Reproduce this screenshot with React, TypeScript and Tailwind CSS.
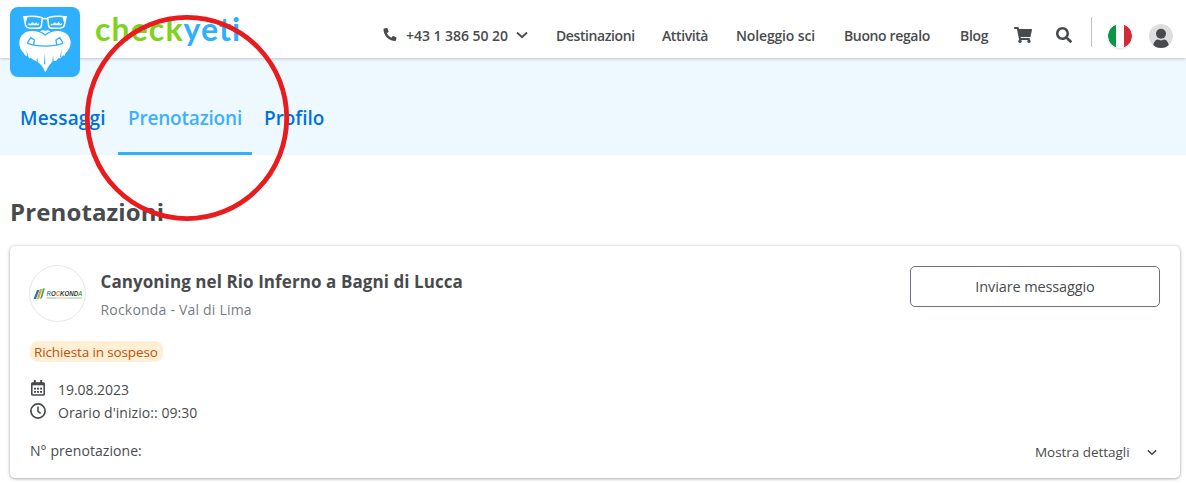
import React from "react";
import { FaPhoneAlt, FaShoppingCart, FaSearch } from "react-icons/fa";

function YetiLogo() {
  return (
    <svg className="relative z-10 h-[70px] w-[70px] shrink-0" viewBox="15 6 210 210">
      <rect x="15" y="6" width="210" height="210" rx="24" fill="#2eb0ff" />
      <path
        fill="#fff"
        d="M121 92C132 83 143 78 158 78C181 78 197 93 197 112C197 126 190 137 182 144L178 153L174 151L167 160L161 159L153 168L146 167C136 175 129 184 124 197L120 201C117 191 108 178 98 171L92 167L86 165L78 159L73 160L68 152L61 152L56 144C48 136 43 126 43 113C43 92 59 78 81 78C97 78 110 83 121 92Z"
      />
      <path
        fill="none"
        stroke="#2eb0ff"
        strokeWidth="4"
        strokeLinejoin="round"
        strokeLinecap="round"
        d="M68 115C98 126 143 126 173 115M68 112L77 98L88 105L86 118M173 112L164 98L153 105L155 118"
      />
      <path fill="#2eb0ff" d="M64 136L70 153L67 154ZM96 153L99 173L95 170ZM119 144L121 178L117 178ZM144 150L146 170L142 170ZM169 134L169 156L165 158Z" />
      <path
        fill="none"
        stroke="#fff"
        strokeWidth="4.5"
        strokeLinejoin="round"
        d="M57 36Q83 31 112 38L109 63Q107 70 99 70L73 69Q64 68 62 61ZM128 38Q157 31 183 36L178 61Q176 68 167 69L141 70Q133 70 131 63ZM110 43Q120 38 130 43"
      />
      <path fill="#fff" d="M54 33L68 34L63 52ZM186 33L172 34L177 52Z" />
      <path
        fill="#fff"
        d="M70 61L71 54L76 57L82 51L88 56L94 52L98 57L103 55L101 61ZM137 61L138 56L143 57L149 52L155 56L161 51L167 57L172 54L170 61Z"
      />
      <path fill="#fff" d="M105 80Q112 73 120 77Q129 73 136 80Q128 79 121 88Q114 79 105 80Z" />
    </svg>
  );
}

function Chevron({ className }: { className: string }) {
  return (
    <svg className={className} viewBox="0 0 12 8" fill="none" stroke="#484b4d" strokeWidth="1.8">
      <path d="M1 1.5L6 6.2L11 1.5" />
    </svg>
  );
}

function Flag() {
  return (
    <svg className="ml-4 h-6 w-6 shrink-0 rounded-full shadow" viewBox="0 0 24 24">
      <clipPath id="flag">
        <circle cx="12" cy="12" r="12" />
      </clipPath>
      <g clipPath="url(#flag)">
        <rect width="24" height="24" fill="#fff" />
        <rect width="8" height="24" fill="#0b9546" />
        <rect x="16" width="8" height="24" fill="#d02b36" />
      </g>
    </svg>
  );
}

function Avatar() {
  return (
    <svg className="ml-[17px] h-6 w-6 shrink-0" viewBox="0 0 24 24">
      <clipPath id="avatar">
        <circle cx="12" cy="12" r="12" />
      </clipPath>
      <g clipPath="url(#avatar)">
        <rect width="24" height="24" fill="#dedede" />
        <circle cx="12" cy="9.7" r="5" fill="#484b4d" />
        <path d="M4 24C4 18 7 15.6 9 15.6Q12 17.2 15 15.6C17 15.6 20 18 20 24Z" fill="#484b4d" />
      </g>
    </svg>
  );
}

function Header() {
  return (
    <header className="relative z-10 flex h-[58px] items-start bg-white pl-[10px] shadow-[0_1px_3px_rgba(0,0,0,0.2)]">
      <div className="flex w-[373px] shrink-0 pt-[7px]">
        <YetiLogo />
        <div className="ml-[15px] mt-[2px] h-10 whitespace-nowrap font-['Lato'] text-[32px] font-bold leading-10 tracking-[1.1px] text-[#7ed321]">
          check<span className="text-[#2eb0ff]">yeti</span>
        </div>
      </div>
      <nav className="flex h-[58px] items-center whitespace-nowrap pt-[14px] text-[14px] font-semibold leading-5">
        <FaPhoneAlt className="mb-[4px] h-[13px] w-[14px] shrink-0" />
        <span className="ml-[9px] w-[102px] shrink-0 tracking-[-0.04px]">+43 1 386 50 20</span>
        <Chevron className="mb-[2px] ml-2 h-2 w-3 shrink-0" />
        <a className="ml-[28px] w-[78px] shrink-0 tracking-[-0.4px]">Destinazioni</a>
        <a className="ml-[28px] w-[46px] shrink-0 tracking-[-0.4px]">Attività</a>
        <a className="ml-[28px] w-[79px] shrink-0 tracking-[-0.15px]">Noleggio sci</a>
        <a className="ml-[29px] w-[86px] shrink-0 tracking-[-0.36px]">Buono regalo</a>
        <a className="ml-[30px] w-[28px] shrink-0 tracking-[-0.3px]">Blog</a>
        <FaShoppingCart className="mb-[3px] ml-[26px] h-[16px] w-[18px] shrink-0" />
        <FaSearch className="mb-[3px] ml-[24px] h-[16px] w-[16px] shrink-0" />
        <div className="mb-[8px] ml-[19px] h-[30px] w-px shrink-0 bg-[#bfc1c4]" />
        <Flag />
        <Avatar />
      </nav>
    </header>
  );
}

function Tabs() {
  return (
    <div className="flex h-[97px] items-end whitespace-nowrap bg-[#edf8ff] pl-[10px] text-[19px] font-semibold leading-7 text-[#0071db]">
      <a className="h-[51px] w-[108px] pl-[10px] tracking-[0.18px]">Messaggi</a>
      <a className="h-[51px] w-[134px] border-b-[3px] border-[#2eb0ff] pl-[10px] tracking-[-0.2px] text-[#40aeff]">Prenotazioni</a>
      <a className="h-[51px] w-[80px] pl-[12px] tracking-[-0.05px]">Profilo</a>
    </div>
  );
}

function RockondaLogo() {
  return (
    <div className="flex h-[57px] w-[57px] shrink-0 items-center justify-center rounded-full border border-[#e6e7e9]">
      <svg className="h-[14px] w-[50px]" viewBox="0 0 50 14">
        <path d="M0.5 12L4 3H6.5L3 12Z" fill="#2878b8" />
        <path d="M3.8 12L7 2H9.3L6 12Z" fill="#e0a32e" />
        <path d="M7 12L10 1.5H12L9 11Z" fill="#4ca64b" />
        <text x="13.5" y="9.2" fontFamily="Liberation Sans" fontStyle="italic" fontWeight="bold" fontSize="6.6" fill="#333" textLength="36" lengthAdjust="spacingAndGlyphs">
          <tspan fill="#4d8fbf">R</tspan>O<tspan fill="#e58a38">C</tspan>KOND<tspan fill="#4ca64b">A</tspan>
        </text>
        <path d="M13.5 11H23" stroke="#85b8d8" />
        <path d="M23 11H36" stroke="#edbd7c" />
        <path d="M36 11H49" stroke="#92c892" />
      </svg>
    </div>
  );
}

function CalendarIcon() {
  return (
    <svg className="h-4 w-4 shrink-0" viewBox="0 0 16 16" fill="none" stroke="#484b4d" strokeWidth="1.6">
      <rect x="1.8" y="3" width="12.4" height="12" rx="0.8" />
      <path d="M1.8 4H14.2" strokeWidth="2.6" />
      <path d="M4.8 0V4M11.2 0V4" strokeWidth="2" />
      <path d="M4 8.7H12M4 11.8H12" strokeWidth="1.8" strokeDasharray="2 1" />
    </svg>
  );
}

function ClockIcon() {
  return (
    <svg className="h-4 w-4 shrink-0" viewBox="0 0 16 16" fill="none" stroke="#484b4d" strokeWidth="1.7">
      <circle cx="8" cy="8" r="7.1" />
      <path d="M8 3.4V8.3L10.6 10.4" strokeWidth="1.6" />
    </svg>
  );
}

function BookingCard() {
  return (
    <section className="mt-[17px] flex h-[232px] w-[1170px] flex-col rounded-[5px] bg-white px-5 pt-[18px] shadow-[0_0_4px_rgba(0,0,0,0.15),0_1px_3px_rgba(0,0,0,0.25)]">
      <div className="flex h-[76px] justify-between">
        <div className="-ml-[1px] flex pt-px">
          <RockondaLogo />
          <div className="ml-[14.5px] whitespace-nowrap pt-[5px]">
            <h2 className="text-[17px] font-bold leading-6 tracking-[0.08px]">Canyoning nel Rio Inferno a Bagni di Lucca</h2>
            <p className="mt-[6px] text-[14px] leading-5 tracking-[0.2px] text-[#777c83]">Rockonda - Val di Lima</p>
          </div>
        </div>
        <button className="mt-[2px] h-[41px] w-[250px] rounded-[5px] border border-[#6b7280] text-[14.5px] tracking-[-0.12px]">Inviare messaggio</button>
      </div>
      <div className="mt-[1px] h-[21px] w-[133px] whitespace-nowrap rounded-[8px] bg-[#fff0d5] pl-[4px] text-[13.5px] leading-[22px] tracking-[-0.13px] text-[#c14f0a]">
        Richiesta in sospeso
      </div>
      <div className="mt-[18px] flex h-[20px] items-start text-[14px] leading-[22px] tracking-[-0.05px]">
        <CalendarIcon />
        <span className="-mt-px ml-[12px]">19.08.2023</span>
      </div>
      <div className="mt-[3px] flex h-[20px] items-start text-[14px] leading-[22px] tracking-[0.05px]">
        <ClockIcon />
        <span className="-mt-px ml-[12px]">Orario d'inizio:: 09:30</span>
      </div>
      <div className="mt-[17px] flex justify-between leading-[22px]">
        <span className="text-[14px] tracking-[0.07px]">N° prenotazione:</span>
        <div className="flex w-[125px] items-center justify-between pr-[3px] pt-px text-[13.5px] tracking-[-0.04px]">
          Mostra dettagli
          <Chevron className="h-[7px] w-[10px]" />
        </div>
      </div>
    </section>
  );
}

export default function App() {
  return (
    <div className="relative h-[483px] w-[1186px] overflow-hidden bg-white font-['Open_Sans',sans-serif] text-[#484b4d]">
      <Header />
      <Tabs />
      <main className="px-[10px] pt-[40px]">
        <h1 className="h-[34px] text-[24px] font-bold leading-[33px] tracking-[0.12px]">Prenotazioni</h1>
        <BookingCard />
      </main>
      <svg className="absolute left-[80px] top-[10px] z-20 h-[216px] w-[214px]" viewBox="80 10 214 216">
        <ellipse cx="187" cy="118" rx="99.7" ry="100.6" fill="none" stroke="#e81c1c" strokeWidth="4.8" />
      </svg>
    </div>
  );
}
